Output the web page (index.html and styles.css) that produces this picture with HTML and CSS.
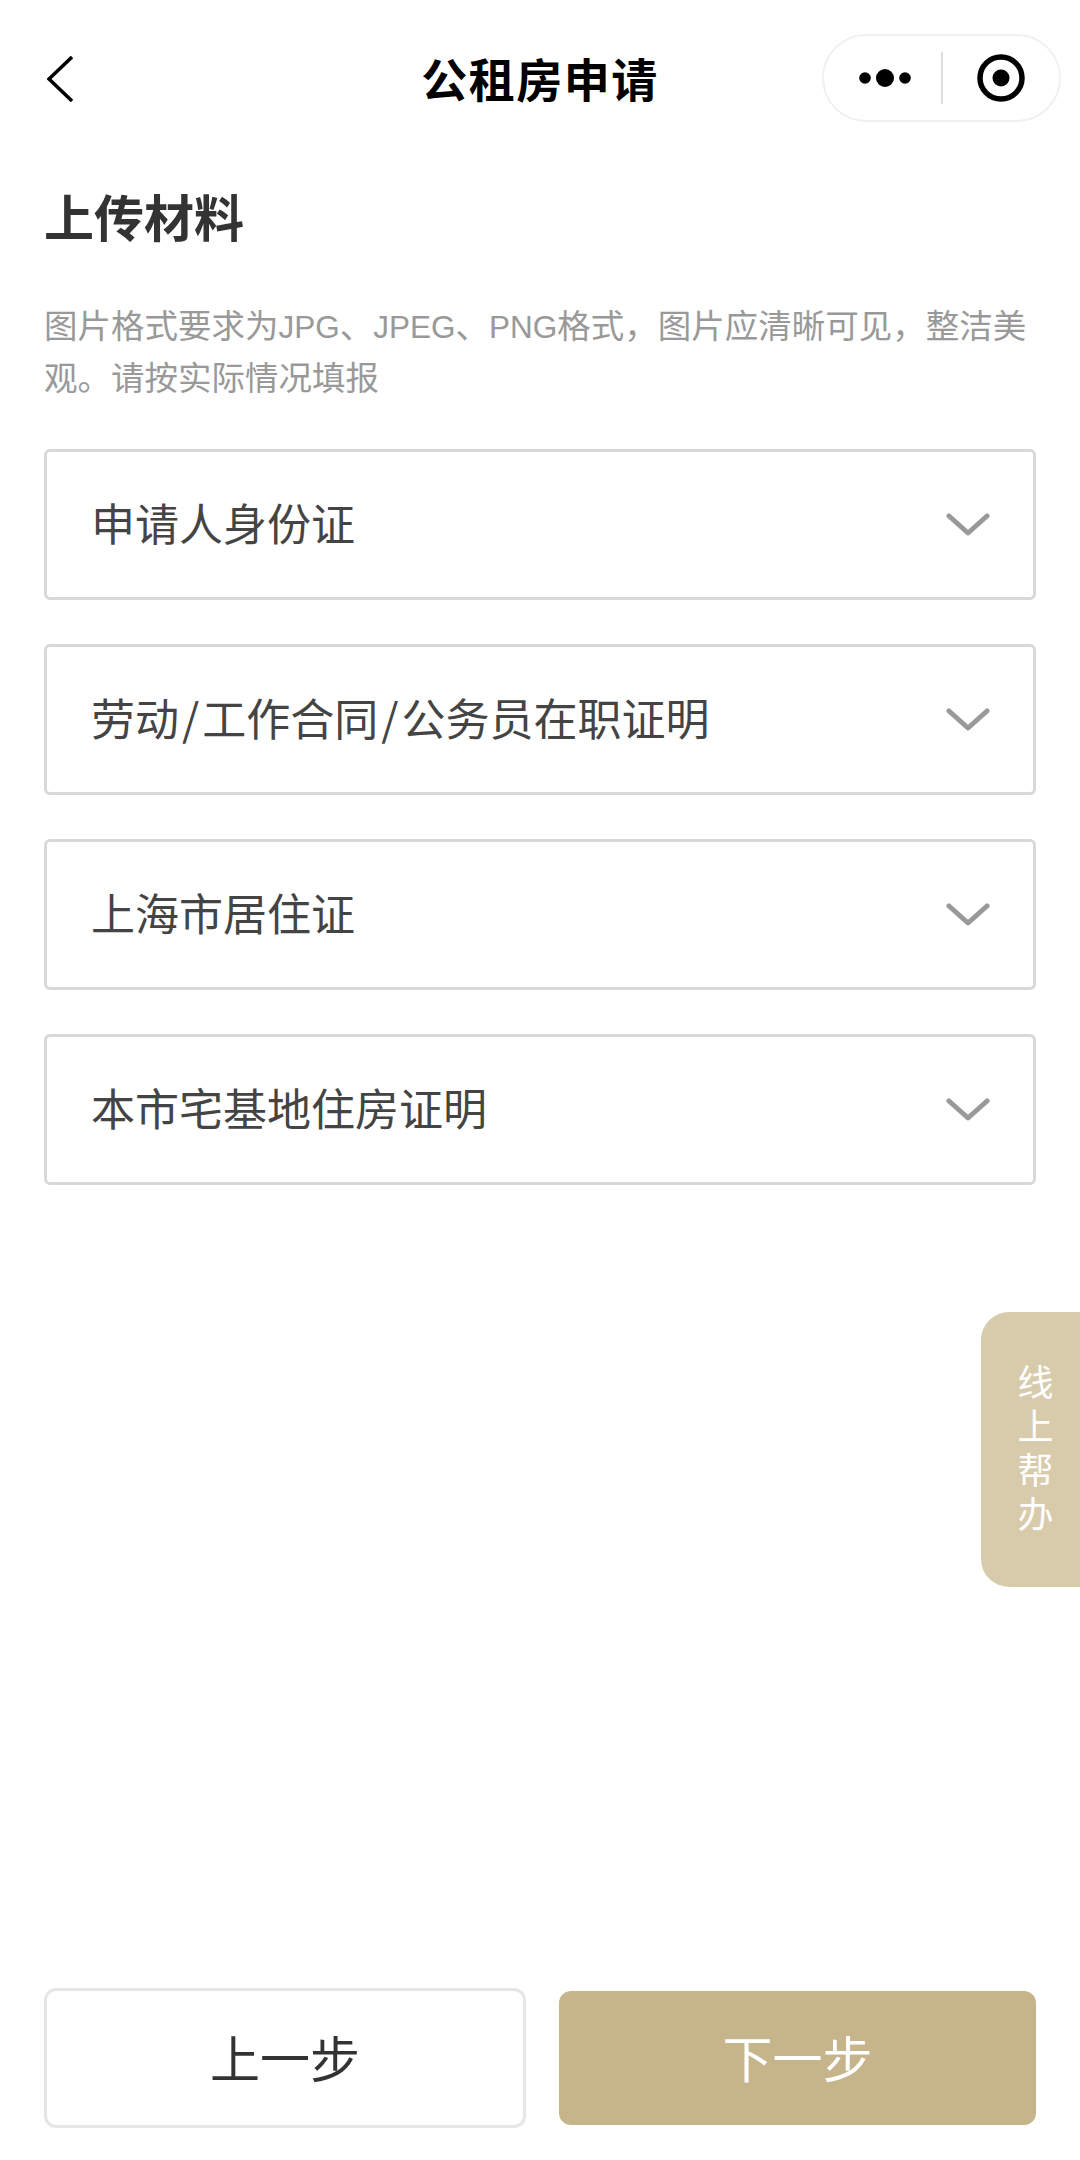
FILE: index.html
```html
<!DOCTYPE html>
<html lang="zh-CN">
<head>
  <meta charset="UTF-8">
  <title>公租房申请</title>
  <link rel="stylesheet" href="styles.css">
</head>
<body>

  <header class="nav">
    <svg class="nav-back" width="26" height="46" viewBox="0 0 26 46">
      <path d="M25 1 L2 23 L25 45" fill="none" stroke="#000" stroke-width="3.5"/>
    </svg>
    <h1 class="nav-title">公租房申请</h1>
    <div class="capsule">
      <svg class="capsule-more" width="54" height="20" viewBox="0 0 54 20">
        <circle cx="7" cy="10" r="5.8" fill="#000"/>
        <circle cx="27" cy="10" r="9" fill="#000"/>
        <circle cx="47" cy="10" r="5.8" fill="#000"/>
      </svg>
      <span class="capsule-line"></span>
      <svg class="capsule-target" width="48" height="48" viewBox="0 0 48 48">
        <circle cx="24" cy="24" r="21" fill="none" stroke="#000" stroke-width="5.5"/>
        <circle cx="24" cy="24" r="8.5" fill="#000"/>
      </svg>
    </div>
  </header>

  <main class="content">
    <h2 class="title">上传材料</h2>
    <p class="hint">图片格式要求为<span class="latin">JPG</span>、<span class="latin">JPEG</span>、<span class="latin">PNG</span>格式，图片应清晰可见，整洁美<br>观。请按实际情况填报</p>

    <div class="list">
      <div class="item">
        <span>申请人身份证</span>
        <svg class="arrow" width="44" height="24" viewBox="0 0 44 24"><path d="M3 3 L22 20 L41 3" fill="none" stroke="#999" stroke-width="5" stroke-linecap="round" stroke-linejoin="round"/></svg>
      </div>
      <div class="item">
        <span>劳动<i class="slash">/</i>工作合同<i class="slash">/</i>公务员在职证明</span>
        <svg class="arrow" width="44" height="24" viewBox="0 0 44 24"><path d="M3 3 L22 20 L41 3" fill="none" stroke="#999" stroke-width="5" stroke-linecap="round" stroke-linejoin="round"/></svg>
      </div>
      <div class="item">
        <span>上海市居住证</span>
        <svg class="arrow" width="44" height="24" viewBox="0 0 44 24"><path d="M3 3 L22 20 L41 3" fill="none" stroke="#999" stroke-width="5" stroke-linecap="round" stroke-linejoin="round"/></svg>
      </div>
      <div class="item">
        <span>本市宅基地住房证明</span>
        <svg class="arrow" width="44" height="24" viewBox="0 0 44 24"><path d="M3 3 L22 20 L41 3" fill="none" stroke="#999" stroke-width="5" stroke-linecap="round" stroke-linejoin="round"/></svg>
      </div>
    </div>
  </main>

  <div class="help">线<br>上<br>帮<br>办</div>

  <footer class="footer">
    <button class="btn btn-prev">上一步</button>
    <button class="btn btn-next">下一步</button>
  </footer>

</body>
</html>
```

FILE: styles.css
```css
body {
  font-family: "Liberation Sans", "Noto Sans CJK SC", sans-serif;
  margin: 0;
  padding: 0;
  background-color: #fff;
  height: 2160px;
  display: flex;
  flex-direction: column;
  position: relative;
  overflow: hidden;
}

.nav {
  height: 160px;
  position: relative;
  display: flex;
  justify-content: center;
  padding-top: 50px;
  box-sizing: border-box;
}

.nav-back {
  position: absolute;
  left: 47px;
  top: 56px;
}

.nav-title {
  margin: 0;
  font-size: 46px;
  line-height: 62px;
  font-weight: 700;
  letter-spacing: 1.5px;
  color: #000;
}

.capsule {
  position: absolute;
  left: 822px;
  top: 34px;
  width: 239px;
  height: 88px;
  box-sizing: border-box;
  border: 2px solid #f0f0f0;
  border-radius: 44px;
  display: flex;
  align-items: center;
}

.capsule-more {
  margin-left: 34px;
}

.capsule-line {
  width: 2px;
  height: 52px;
  margin-left: 29px;
  background: #ddd;
}

.capsule-target {
  margin-left: 34px;
}

.content {
  padding: 25px 44px 0;
}

.title {
  margin: 0;
  font-size: 50px;
  line-height: 70px;
  font-weight: 700;
  color: #333;
}

.hint {
  margin: 46px 0 44px;
  font-size: 33.5px;
  line-height: 52px;
  color: #999;
}

.latin {
  font-size: 31.5px;
}

.list {
  display: flex;
  flex-direction: column;
  gap: 44px;
}

.item {
  height: 151px;
  box-sizing: border-box;
  border: 3px solid #d8d8d8;
  border-radius: 6px;
  padding: 0 43px 6px 44px;
  display: flex;
  align-items: center;
  justify-content: space-between;
  font-size: 44px;
  color: #444;
}

.arrow {
  margin-top: 6px;
}

.slash {
  font-family: "Noto Sans CJK SC", sans-serif;
  font-style: normal;
  padding: 0 3px;
}

.help {
  position: absolute;
  left: 981px;
  top: 1312px;
  width: 99px;
  height: 275px;
  border-radius: 28px 0 0 28px;
  background: #d8cbac;
  color: #fff;
  font-size: 36px;
  line-height: 44px;
  text-align: center;
  box-sizing: border-box;
  padding: 50px 0 0 10px;
}

.footer {
  margin-top: auto;
  padding: 0 44px 32px;
  display: flex;
  align-items: center;
  gap: 33px;
}

.btn {
  font-family: inherit;
  font-size: 50px;
  border-radius: 12px;
  padding: 0 0 4px;
}

.btn-prev {
  width: 482px;
  height: 140px;
  background: #fff;
  color: #333;
  border: 3px solid #e6e6e6;
}

.btn-next {
  flex: 1;
  height: 134px;
  background: #c6b58a;
  color: #fff;
  border: none;
}
```
